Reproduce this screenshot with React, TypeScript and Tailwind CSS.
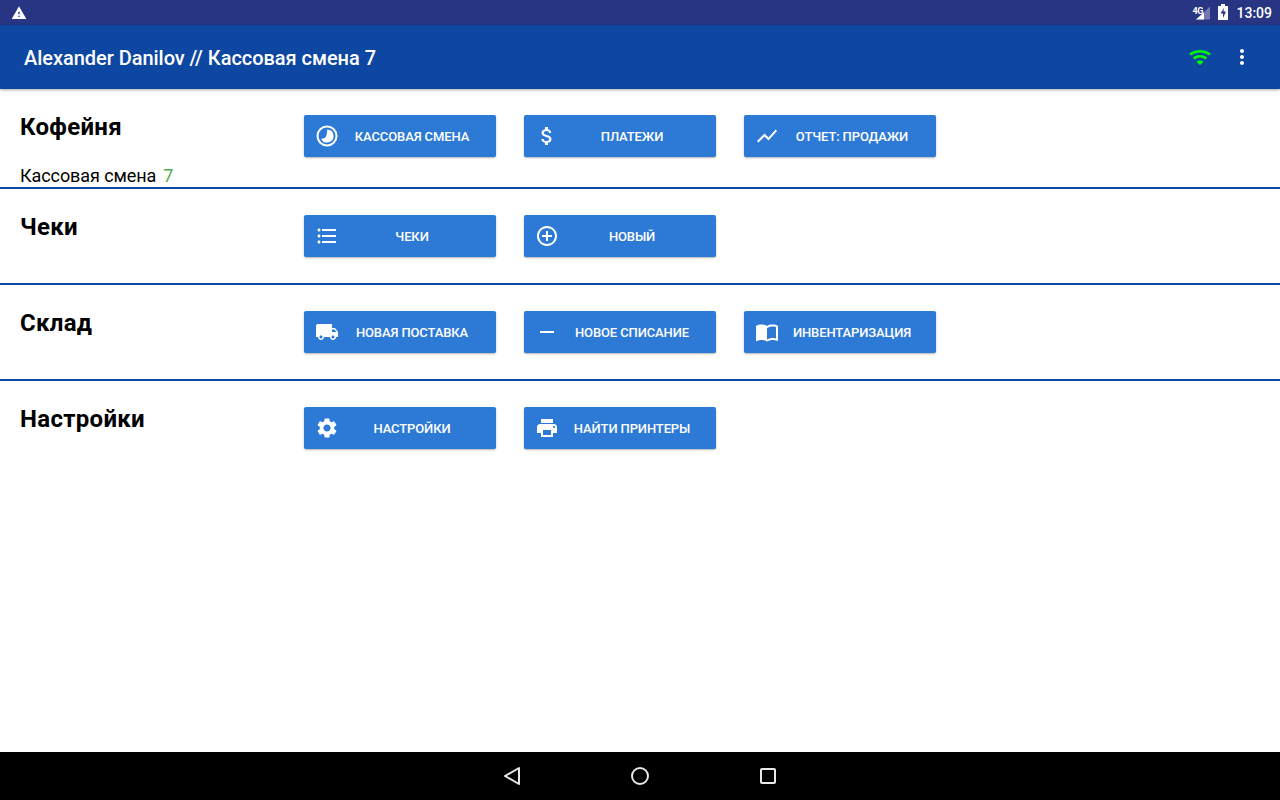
import React from "react";
import {
  MdAttachMoney,
  MdFormatListBulleted,
  MdAddCircleOutline,
  MdShowChart,
  MdLocalShipping,
  MdRemove,
  MdImportContacts,
  MdSettings,
  MdPrint,
  MdWarning,
  MdMoreVert,
} from "react-icons/md";

function ShiftIcon() {
  return (
    <svg width="24" height="24" viewBox="0 0 24 24" fill="none">
      <circle cx="12" cy="12" r="9.5" stroke="white" strokeWidth="2" />
      <path d="M12.3 5.5a6.5 6.5 0 1 1-6.2 9.2c2.6.1 4.6-.8 5.3-3 .5-2 .4-4.1.9-6.2z" fill="white" />
    </svg>
  );
}

function Wifi() {
  return (
    <svg width="24" height="24" viewBox="0 0 24 24" fill="none" stroke="#00ff00" strokeWidth="2.6">
      <path d="M2 9.5c5.8-4.4 14.2-4.4 20 0" />
      <path d="M5.8 13.4c3.7-2.8 8.7-2.8 12.4 0" />
      <path d="M12 20l-3.6-3.3c2.1-1.5 5.1-1.5 7.2 0z" fill="#00ff00" stroke="none" />
    </svg>
  );
}

type Item = { label: string; icon: React.ReactNode };

function ActionButton({ label, icon }: Item) {
  return (
    <button className="flex h-[42px] w-[192px] items-center rounded-[2px] bg-[#2d7ad6] pl-[11px] pr-[11px] text-white shadow-[0_1px_2px_rgba(0,0,0,0.3)]">
      <span className="flex h-6 w-6 shrink-0 items-center justify-center">{icon}</span>
      <span className="flex-1 whitespace-nowrap pt-[2px] text-center text-[13px] font-medium tracking-[-0.12px]">{label}</span>
    </button>
  );
}

function Section({
  title,
  items,
  extra,
  height,
}: {
  title: string;
  items: Item[];
  extra?: React.ReactNode;
  height: string;
}) {
  return (
    <section className={`flex flex-col border-b-2 border-[#0d47a1] ${height}`}>
      <div className="flex flex-1 pl-5 pt-[26px]">
        <h2 className="w-[284px] shrink-0 text-2xl/6 font-bold tracking-[0.3px] text-black">{title}</h2>
        <div className="flex gap-7">
          {items.map((i) => (
            <ActionButton key={i.label} {...i} />
          ))}
        </div>
      </div>
      {extra}
    </section>
  );
}

const ic = "h-6 w-6 text-white";

export default function App() {
  return (
    <div className="flex h-[800px] w-[1280px] flex-col overflow-hidden bg-white font-['Roboto',sans-serif]">
      <div className="flex h-[25px] items-center justify-between bg-[#283583] pl-[11px] pr-2 text-white">
        <MdWarning className="h-4 w-4 text-white" />
        <div className="flex items-center gap-2">
          <div className="relative h-4 w-4">
            <span className="absolute -left-[2px] top-[1px] text-[9px] font-bold leading-[10px] tracking-[-0.5px]">4G</span>
            <svg width="16" height="16" viewBox="0 0 16 16" className="absolute left-0 top-0">
              <path d="M16 1.5v13H2z" fill="white" fillOpacity="0.35" />
              <path d="M10 7.5v7H2z" fill="white" />
            </svg>
          </div>
          <svg width="10" height="16" viewBox="0 0 10 16" className="-mt-[1px]">
            <path d="M0 2h3V0h4v2h3v14H0z" fill="white" />
            <path d="M6 4L2.5 9.5H5V14l3-6.5H5.5z" fill="#283583" />
          </svg>
          <span className="text-sm font-medium">13:09</span>
        </div>
      </div>

      <header className="z-10 flex h-16 shrink-0 items-center justify-between bg-[#0e47a1] pl-6 pr-[26px] shadow-[0_1px_3px_rgba(0,0,0,0.35)]">
        <h1 className="pt-[2px] text-xl font-medium tracking-[-0.04px] text-white">Alexander Danilov // Кассовая смена 7</h1>
        <div className="flex items-center gap-[18px]">
          <Wifi />
          <MdMoreVert className="h-6 w-6 text-white" />
        </div>
      </header>

      <Section
        title="Кофейня"
        height="h-[100px]"
        items={[
          { label: "КАССОВАЯ СМЕНА", icon: <ShiftIcon /> },
          { label: "ПЛАТЕЖИ", icon: <MdAttachMoney className={ic} /> },
          { label: "ОТЧЕТ: ПРОДАЖИ", icon: <MdShowChart className={ic} /> },
        ]}
        extra={
          <p className="flex h-[20px] gap-[7px] pl-5 text-lg/[18px] tracking-[-0.08px] text-black">
            Кассовая смена <span className="text-[#4caf50]">7</span>
          </p>
        }
      />
      <Section
        title="Чеки"
        height="h-[96px]"
        items={[
          { label: "ЧЕКИ", icon: <MdFormatListBulleted className={ic} /> },
          { label: "НОВЫЙ", icon: <MdAddCircleOutline className={ic} /> },
        ]}
      />
      <Section
        title="Склад"
        height="h-[96px]"
        items={[
          { label: "НОВАЯ ПОСТАВКА", icon: <MdLocalShipping className={ic} /> },
          { label: "НОВОЕ СПИСАНИЕ", icon: <MdRemove className={ic} /> },
          { label: "ИНВЕНТАРИЗАЦИЯ", icon: <MdImportContacts className={ic} /> },
        ]}
      />
      <section className="flex flex-1 pl-5 pt-[26px]">
        <h2 className="w-[284px] shrink-0 text-2xl/6 font-bold tracking-[0.3px] text-black">Настройки</h2>
        <div className="flex gap-7">
          <ActionButton label="НАСТРОЙКИ" icon={<MdSettings className={ic} />} />
          <ActionButton label="НАЙТИ ПРИНТЕРЫ" icon={<MdPrint className={ic} />} />
        </div>
      </section>

      <nav className="flex h-12 shrink-0 items-center justify-center gap-[104px] bg-black">
        <svg width="24" height="24" viewBox="0 0 24 24" fill="none" stroke="#e8e8e8" strokeWidth="2" strokeLinejoin="round">
          <path d="M19 4L5 12l14 8z" />
        </svg>
        <svg width="24" height="24" viewBox="0 0 24 24" fill="none" stroke="#e8e8e8" strokeWidth="2">
          <circle cx="12" cy="12" r="8" />
        </svg>
        <svg width="24" height="24" viewBox="0 0 24 24" fill="none" stroke="#e8e8e8" strokeWidth="2" strokeLinejoin="round">
          <rect x="5" y="5" width="14" height="14" rx="1" />
        </svg>
      </nav>
    </div>
  );
}
